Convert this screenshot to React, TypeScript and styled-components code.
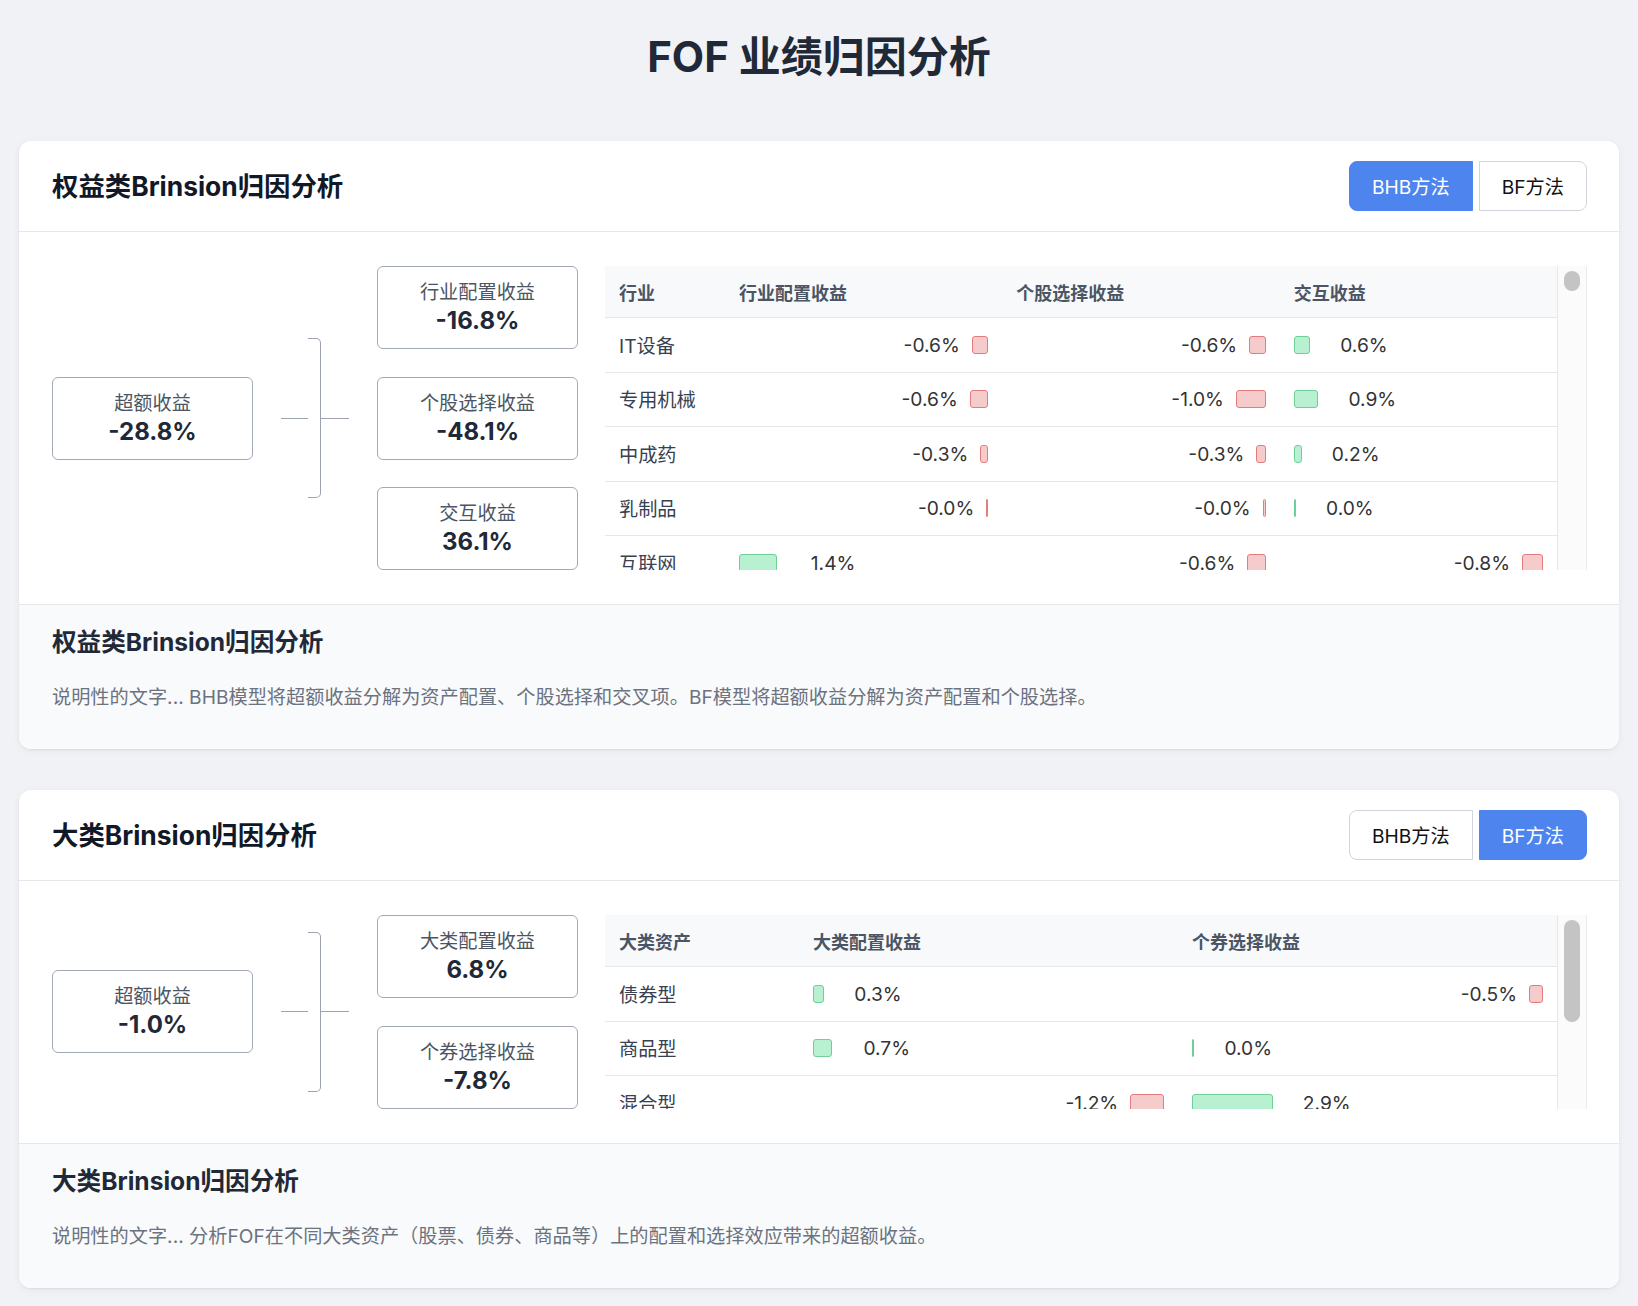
import React from 'react';
import styled, { createGlobalStyle } from 'styled-components';

const GlobalStyle = createGlobalStyle`
  * { box-sizing: border-box; }
  html, body { margin: 0; padding: 0; background: #f0f2f5; }
  body {
    font-family: Inter, "Noto Sans CJK SC", "Noto Sans", sans-serif;
    color: #1f2937;
  }
`;

const Page = styled.div`
  padding: 33px 19px 20px;
`;

const PageTitle = styled.h1`
  margin: 0 0 60px;
  text-align: center;
  font-size: 42px;
  line-height: 48px;
  font-weight: 700;
  color: #1f2937;
`;

const CardList = styled.div`
  display: flex;
  flex-direction: column;
  gap: 41px;
`;

const Card = styled.section`
  background: #ffffff;
  border-radius: 12px;
  box-shadow: 0 1px 2px rgba(0, 0, 0, 0.06), 0 2px 8px rgba(0, 0, 0, 0.05);
  overflow: hidden;
`;

const CardHeader = styled.header`
  display: flex;
  align-items: center;
  justify-content: space-between;
  padding: 20px 32px 20px 33px;
  border-bottom: 1px solid #e5e7eb;
`;

const CardTitle = styled.h2`
  margin: 0;
  font-size: 26.4px;
  line-height: 32px;
  font-weight: 700;
  color: #111827;
`;

const ButtonGroup = styled.div`
  display: flex;
  gap: 6px;
`;

const MethodButton = styled.button<{ $active: boolean; $side: 'left' | 'right' }>`
  height: 50px;
  padding: 0 22px;
  font-family: inherit;
  font-size: 19.2px;
  font-weight: 400;
  cursor: pointer;
  border: 1px solid ${(p) => (p.$active ? '#4e84ee' : '#d1d5db')};
  background: ${(p) => (p.$active ? '#4e84ee' : '#ffffff')};
  color: ${(p) => (p.$active ? '#ffffff' : '#111111')};
  border-radius: ${(p) => (p.$side === 'left' ? '8px 0 0 8px' : '0 8px 8px 0')};
`;

const CardBody = styled.div`
  display: grid;
  grid-template-columns: 526px 1fr;
  column-gap: 27px;
  padding: 34px 32px 34px 33px;
`;

const Diagram = styled.div`
  display: flex;
  align-items: center;
  gap: 28px;
`;

const ResultBox = styled.div`
  width: 201px;
  border: 1px solid #a3aab6;
  border-radius: 6px;
  padding: 12px 10px;
  text-align: center;
  background: #ffffff;
`;

const BoxLabel = styled.div`
  font-size: 19.2px;
  line-height: 27px;
  color: #4b5563;
`;

const BoxValue = styled.div`
  font-size: 24px;
  line-height: 30px;
  font-weight: 700;
  color: #1f2937;
`;

const Connector = styled.div`
  display: flex;
  align-items: center;
`;

const HLine = styled.div<{ $w: number }>`
  width: ${(p) => p.$w}px;
  height: 1px;
  background: #9ca3af;
`;

const Bracket = styled.div`
  width: 13px;
  height: 160px;
  border: 1px solid #9ca3af;
  border-left: none;
  border-radius: 0 5px 5px 0;
`;

const BoxColumn = styled.div`
  display: flex;
  flex-direction: column;
  gap: 27.5px;
`;

const TableFrame = styled.div`
  display: flex;
  height: 0;
  min-height: 100%;
`;

const TableViewport = styled.div`
  flex: 1;
  min-width: 0;
  overflow: hidden;
`;

const ScrollTrack = styled.div`
  width: 30px;
  flex-shrink: 0;
  padding: 5px 6px;
  background: #fbfbfb;
  border-left: 1px solid #e8e8e8;
  border-right: 1px solid #ececec;
`;

const ScrollThumb = styled.div<{ $h: number }>`
  height: ${(p) => p.$h}px;
  border-radius: 8px;
  background: #c4c4c4;
`;

const Table = styled.table`
  width: 100%;
  border-collapse: separate;
  border-spacing: 0;
  table-layout: fixed;
`;

const Th = styled.th`
  height: 52px;
  padding: 0 14px;
  text-align: left;
  font-size: 18px;
  font-weight: 600;
  color: #4b5563;
  background: #f8f9fb;
  border-bottom: 1px solid #e5e7eb;
  white-space: nowrap;
`;

const Td = styled.td`
  height: 54.5px;
  padding: 0 14px;
  font-size: 19.2px;
  color: #374151;
  border-bottom: 1px solid #e5e7eb;
  white-space: nowrap;
`;

const ValueCell = styled.div<{ $neg: boolean }>`
  display: flex;
  align-items: center;
  justify-content: ${(p) => (p.$neg ? 'flex-end' : 'flex-start')};
  gap: 12px;
`;

const ValueText = styled.span`
  width: 66px;
  flex-shrink: 0;
  text-align: right;
  color: #333333;
`;

const Bar = styled.span<{ $neg: boolean }>`
  display: block;
  height: 18px;
  flex-shrink: 0;
  border-radius: 3px;
  border: 1px solid ${(p) => (p.$neg ? '#e57b7b' : '#6fcf97')};
  background: ${(p) => (p.$neg ? '#f6cbcb' : '#b8f0d2')};
`;

const DescSection = styled.div`
  background: #f9fafb;
  border-top: 1px solid #e5e7eb;
  padding: 23px 32px 37px 33px;
`;

const DescTitle = styled.h3`
  margin: 0 0 26px;
  font-size: 24.6px;
  line-height: 28px;
  font-weight: 700;
  color: #1f2937;
`;

const DescText = styled.p`
  margin: 0;
  font-size: 19.2px;
  line-height: 30px;
  color: #6b7280;
`;

type Cell = { text: string; w: number };
type Row = { name: string; cells: Cell[] };

const isNeg = (cell: Cell) => cell.text.startsWith('-');

const ValueBar: React.FC<{ cell: Cell }> = ({ cell }) => {
  const neg = isNeg(cell);
  const text = <ValueText>{cell.text}</ValueText>;
  const bar = <Bar $neg={neg} style={{ width: `${Math.max(2, cell.w)}px` }} />;
  return (
    <ValueCell $neg={neg}>
      {neg ? (
        <>
          {text}
          {bar}
        </>
      ) : (
        <>
          {bar}
          {text}
        </>
      )}
    </ValueCell>
  );
};

const c = (text: string, w: number): Cell => ({ text, w });

const equityRows: Row[] = [
  { name: 'IT设备', cells: [c('-0.6%', 16.5), c('-0.6%', 16.5), c('0.6%', 16)] },
  { name: '专用机械', cells: [c('-0.6%', 18.6), c('-1.0%', 29.7), c('0.9%', 24.5)] },
  { name: '中成药', cells: [c('-0.3%', 8), c('-0.3%', 9.2), c('0.2%', 7.9)] },
  { name: '乳制品', cells: [c('-0.0%', 2), c('-0.0%', 3), c('0.0%', 2)] },
  { name: '互联网', cells: [c('1.4%', 38.4), c('-0.6%', 18.4), c('-0.8%', 21)] },
  { name: '休闲服务', cells: [c('-0.2%', 6), c('0.4%', 11), c('-0.1%', 3)] },
  { name: '保险', cells: [c('0.5%', 14), c('-0.7%', 19), c('0.3%', 8)] },
  { name: '光伏设备', cells: [c('-0.9%', 25), c('0.2%', 6), c('0.1%', 3)] },
];

const assetRows: Row[] = [
  { name: '债券型', cells: [c('0.3%', 10.6), c('-0.5%', 14)] },
  { name: '商品型', cells: [c('0.7%', 19), c('0.0%', 2)] },
  { name: '混合型', cells: [c('-1.2%', 33.8), c('2.9%', 80.7)] },
  { name: '股票型', cells: [c('-0.4%', 11), c('-1.8%', 49.5)] },
  { name: '货币型', cells: [c('0.1%', 3), c('0.0%', 2)] },
];

type Section = {
  title: string;
  activeMethod: 'BHB' | 'BF';
  total: string;
  parts: { label: string; value: string }[];
  firstColWidth: number;
  headers: string[];
  rows: Row[];
  thumb: number;
  desc: string;
};

const sections: Section[] = [
  {
    title: '权益类Brinsion归因分析',
    activeMethod: 'BHB',
    total: '-28.8%',
    parts: [
      { label: '行业配置收益', value: '-16.8%' },
      { label: '个股选择收益', value: '-48.1%' },
      { label: '交互收益', value: '36.1%' },
    ],
    firstColWidth: 120,
    headers: ['行业', '行业配置收益', '个股选择收益', '交互收益'],
    rows: equityRows,
    thumb: 20,
    desc:
      '说明性的文字... BHB模型将超额收益分解为资产配置、个股选择和交叉项。BF模型将超额收益分解为资产配置和个股选择。',
  },
  {
    title: '大类Brinsion归因分析',
    activeMethod: 'BF',
    total: '-1.0%',
    parts: [
      { label: '大类配置收益', value: '6.8%' },
      { label: '个券选择收益', value: '-7.8%' },
    ],
    firstColWidth: 194,
    headers: ['大类资产', '大类配置收益', '个券选择收益'],
    rows: assetRows,
    thumb: 102,
    desc: '说明性的文字... 分析FOF在不同大类资产（股票、债券、商品等）上的配置和选择效应带来的超额收益。',
  },
];

const AnalysisCard: React.FC<{ s: Section }> = ({ s }) => (
  <Card>
    <CardHeader>
      <CardTitle>{s.title}</CardTitle>
      <ButtonGroup>
        <MethodButton $active={s.activeMethod === 'BHB'} $side="left">
          BHB方法
        </MethodButton>
        <MethodButton $active={s.activeMethod === 'BF'} $side="right">
          BF方法
        </MethodButton>
      </ButtonGroup>
    </CardHeader>
    <CardBody>
      <Diagram>
        <ResultBox>
          <BoxLabel>超额收益</BoxLabel>
          <BoxValue>{s.total}</BoxValue>
        </ResultBox>
        <Connector>
          <HLine $w={27} />
          <Bracket />
          <HLine $w={28} />
        </Connector>
        <BoxColumn>
          {s.parts.map((p) => (
            <ResultBox key={p.label}>
              <BoxLabel>{p.label}</BoxLabel>
              <BoxValue>{p.value}</BoxValue>
            </ResultBox>
          ))}
        </BoxColumn>
      </Diagram>
      <TableFrame>
        <TableViewport>
          <Table>
            <colgroup>
              <col style={{ width: `${s.firstColWidth}px` }} />
              {s.headers.slice(1).map((h) => (
                <col key={h} />
              ))}
            </colgroup>
            <thead>
              <tr>
                {s.headers.map((h) => (
                  <Th key={h}>{h}</Th>
                ))}
              </tr>
            </thead>
            <tbody>
              {s.rows.map((r) => (
                <tr key={r.name}>
                  <Td>{r.name}</Td>
                  {r.cells.map((cell, i) => (
                    <Td key={i}>
                      <ValueBar cell={cell} />
                    </Td>
                  ))}
                </tr>
              ))}
            </tbody>
          </Table>
        </TableViewport>
        <ScrollTrack>
          <ScrollThumb $h={s.thumb} />
        </ScrollTrack>
      </TableFrame>
    </CardBody>
    <DescSection>
      <DescTitle>{s.title}</DescTitle>
      <DescText>{s.desc}</DescText>
    </DescSection>
  </Card>
);

export default function App() {
  return (
    <>
      <GlobalStyle />
      <Page>
        <PageTitle>FOF 业绩归因分析</PageTitle>
        <CardList>
          {sections.map((s) => (
            <AnalysisCard key={s.title} s={s} />
          ))}
        </CardList>
      </Page>
    </>
  );
}
